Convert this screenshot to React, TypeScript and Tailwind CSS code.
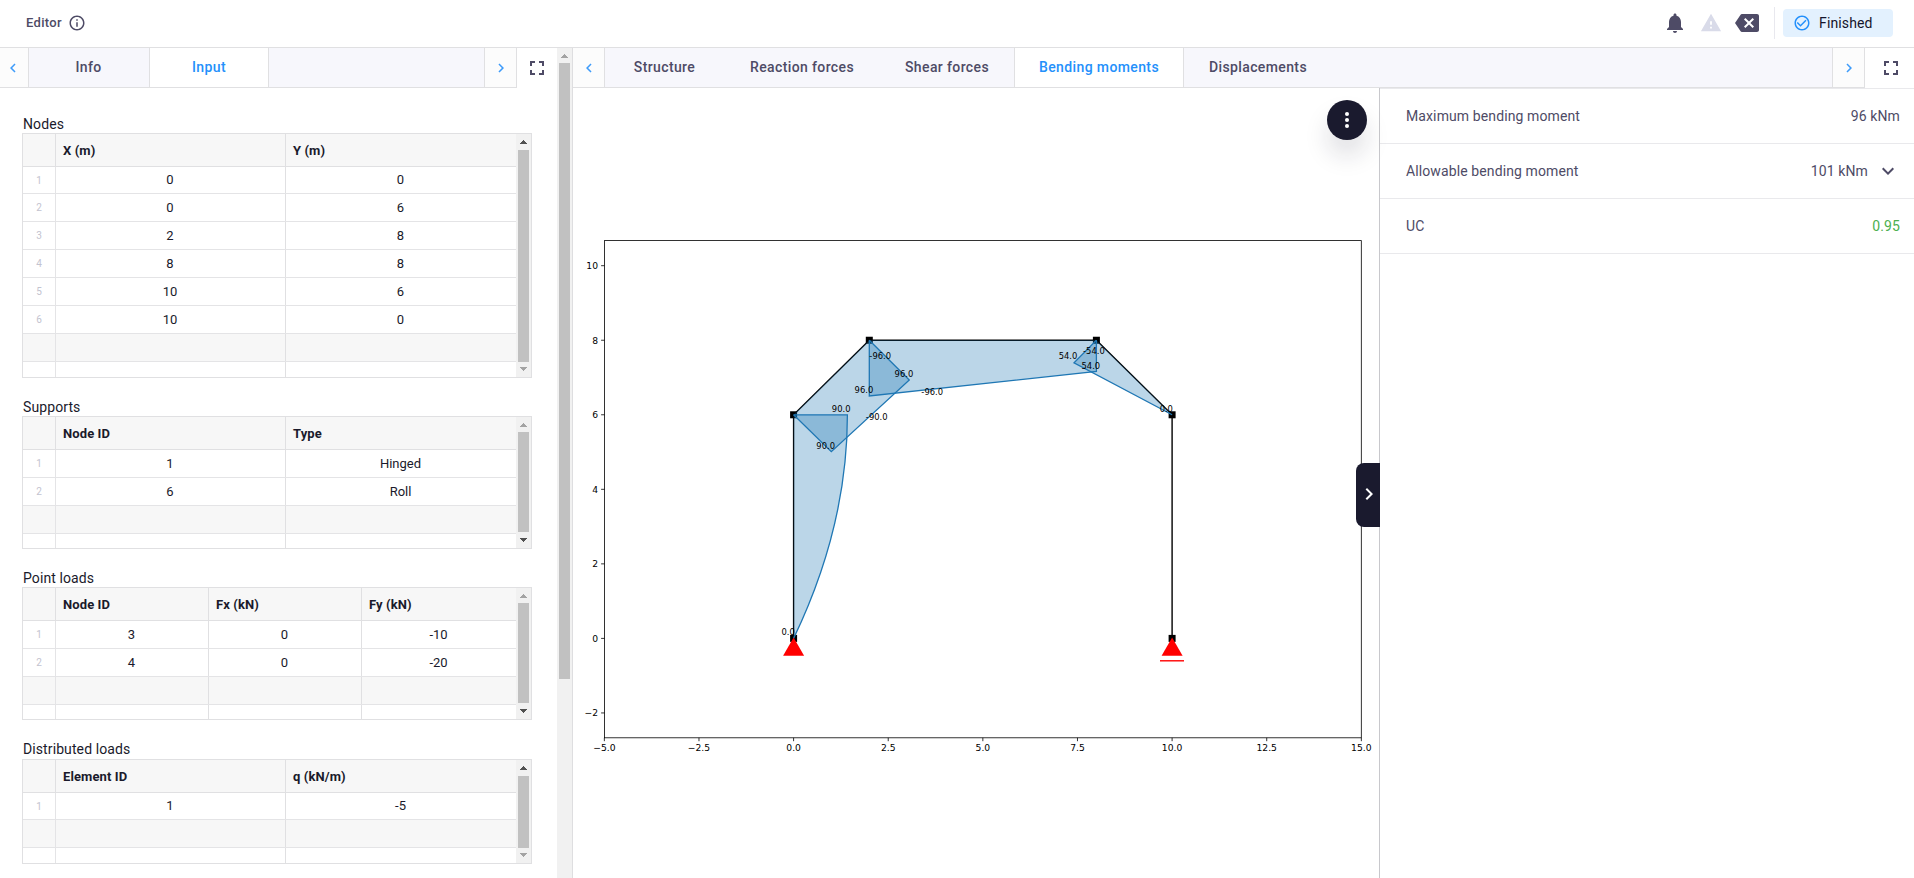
import React from "react";

type Column = { title: string; width: string };
type TableProps = {
  label: string;
  labelHeight: string;
  height: string;
  columns: Column[];
  rows: string[][];
  firstRow: string;
  thumb: string;
  atTop: boolean;
};

function ScrollBar({ thumb, up, down }: { thumb: string; up: string; down: string }) {
  return (
    <div className="flex w-[15px] shrink-0 flex-col items-center bg-[#f1f1f1]">
      <svg className={`mt-[6px] h-[4px] w-[7px] shrink-0 ${up}`} viewBox="0 0 7 4" fill="currentColor" shapeRendering="crispEdges">
        <path d="M3 0h1v1h1v1h1v1h1v1H0V3h1V2h1V1h1z" />
      </svg>
      <div className={`w-[11px] shrink-0 bg-[#c1c1c1] ${thumb}`} />
      <svg className={`h-[4px] w-[7px] shrink-0 ${down}`} viewBox="0 0 7 4" fill="currentColor" shapeRendering="crispEdges">
        <path d="M0 0h7v1H6v1H5v1H4v1H3V3H2V2H1V1H0z" />
      </svg>
    </div>
  );
}

function DataTable({ label, labelHeight, height, columns, rows, firstRow, thumb, atTop }: TableProps) {
  return (
    <section>
      <div className={`flex items-end pl-px text-[14px] leading-[17px] tracking-[0.1px] text-[#1a1a2b] ${labelHeight}`}>{label}</div>
      <div className={`flex w-[510px] overflow-hidden border border-[#e0e0e2] ${height}`}>
        <div className="w-[493px] shrink-0">
          <div className="flex h-[33px] border-b border-[#e0e0e2] bg-[#f7f7f7] text-[13px] font-bold tracking-[0.1px] text-[#1a1a2b]">
            <div className="w-[33px] shrink-0 border-r border-[#e0e0e2]" />
            {columns.map((c, i) => (
              <div key={c.title} className={`flex shrink-0 items-center border-[#e0e0e2] pt-[2px] pl-[7px] ${c.width} ${i < columns.length - 1 ? "border-r" : ""}`}>
                {c.title}
              </div>
            ))}
          </div>
          {[...rows, null, null].map((row, r) => (
            <div
              key={r}
              className={`flex border-b border-[#e4e4e6] text-[13px] text-[#1a1a2b] ${r === 0 ? firstRow : "h-[28px]"} ${r === rows.length ? "bg-[#f7f7f7]" : "bg-white"}`}
            >
              <div className="flex w-[33px] shrink-0 items-center justify-center border-r border-[#e4e4e6] text-[10px] text-[#c3c3cf]">
                {row ? r + 1 : ""}
              </div>
              {columns.map((c, i) => (
                <div
                  key={c.title}
                  className={`flex shrink-0 items-center justify-center border-[#e0e0e2] pr-px ${r === 0 && atTop ? "pb-px" : "pt-px"} ${c.width} ${i < columns.length - 1 ? "border-r" : ""}`}
                >
                  {row ? row[i] : ""}
                </div>
              ))}
            </div>
          ))}
        </div>
        <ScrollBar thumb={thumb} up={atTop ? "text-[#505050]" : "text-[#a3a3a3]"} down={atTop ? "mt-[5px] text-[#a3a3a3]" : "mt-[6px] text-[#505050]"} />
      </div>
    </section>
  );
}

function Chevron({ d, className }: { d: string; className: string }) {
  return (
    <svg viewBox="0 0 24 24" className={className} fill="currentColor">
      <path d={d} />
    </svg>
  );
}
const LEFT = "M15.41 7.41 14 6l-6 6 6 6 1.41-1.41L10.83 12z";
const RIGHT = "M10 6 8.59 7.41 13.17 12l-4.58 4.59L10 18l6-6z";
const DOWN = "M16.59 8.59 12 13.17 7.41 8.59 6 10l6 6 6-6z";

function Fullscreen() {
  return (
    <svg viewBox="0 0 24 24" className="size-6 text-[#4e4b66]" fill="currentColor">
      <path d="M7 14H5v5h5v-2H7v-3zm-2-4h2V7h3V5H5v5zm12 7h-3v2h5v-5h-2v3zM14 5v2h3v3h2V5h-5z" />
    </svg>
  );
}

const X0 = 220.6;
const Y0 = 550.4;
const SX = 37.85;
const SY = 37.27;
const px = (x: number) => X0 + x * SX;
const py = (y: number) => Y0 - y * SY;

const nodes: [number, number][] = [[0, 0], [0, 6], [2, 8], [8, 8], [10, 6], [10, 0]];
const xTicks: [number, string][] = [[-5, "−5.0"], [-2.5, "−2.5"], [0, "0.0"], [2.5, "2.5"], [5, "5.0"], [7.5, "7.5"], [10, "10.0"], [12.5, "12.5"], [15, "15.0"]];
const yTicks: [number, string][] = [[10, "10"], [8, "8"], [6, "6"], [4, "4"], [2, "2"], [0, "0"], [-2, "−2"]];
const labels: [number, number, string][] = [
  [215.2, 547.2, "0.0"], [268.2, 323.5, "90.0"], [252.7, 360.9, "90.0"], [303.7, 331.5, "-90.0"],
  [307.2, 271.2, "-96.0"], [330.9, 288.7, "96.0"], [290.9, 305.2, "96.0"], [359.2, 306.7, "-96.0"],
  [495, 271.2, "54.0"], [520.9, 265.5, "-54.0"], [517.8, 280.6, "54.0"], [593.3, 323.5, "0.0"],
];

function MomentChart() {
  return (
    <svg className="block h-[790px] w-[806px]" viewBox="0 0 806 790">
      <path d={nodes.map(([x, y], i) => `${i ? "L" : "M"}${px(x)} ${py(y)}`).join("")} fill="none" stroke="#000" strokeWidth="1.4" />
      {nodes.map(([x, y], i) => (
        <rect key={i} x={px(x) - 3.5} y={py(y) - 3.5} width="7" height="7" fill="#000" />
      ))}
      <g fill="#1f77b4" fillOpacity="0.3">
        <path d="M220.6 550.4Q274.4 438.5 274.4 326.8H220.6z" />
        <path d="M220.6 326.8 296.3 252.2 336.3 292 258.3 363.7z" />
        <path d="M296.3 252.2V308L523.4 283.4V252.2z" />
        <path d="M523.4 252.2 501 274.8 599.1 326.8z" />
      </g>
      <g fill="none" stroke="#1f77b4" strokeWidth="1.3">
        <path d="M220.6 550.4Q274.4 438.5 274.4 326.8H220.6" />
        <path d="M220.6 326.8 258.3 363.7 336.3 292 296.3 252.2" />
        <path d="M296.3 252.2V308L523.4 283.4V252.2" />
        <path d="M523.4 252.2 501 274.8 599.1 326.8" />
      </g>
      <g fill="#f00">
        <path d={`M${px(0)} 549.4l10.5 18.4h-21z`} />
        <path d={`M${px(10)} 549.4l10.5 18.4h-21z`} />
      </g>
      <path d="M587 572.8h24" stroke="#f00" strokeWidth="1.4" />
      <g fontFamily="DejaVu Sans, sans-serif" fontSize="8.4" textAnchor="middle" fill="#000">
        {labels.map(([x, y, t], i) => (
          <text key={i} x={x} y={y}>{t}</text>
        ))}
      </g>
      <rect x="31.5" y="152.6" width="756.8" height="497.2" fill="none" stroke="#000" strokeWidth="0.8" />
      <g stroke="#000" strokeWidth="0.8">
        {xTicks.map(([v]) => <path key={v} d={`M${px(v)} 649.8v3.4`} />)}
        {yTicks.map(([v]) => <path key={v} d={`M31.5 ${py(v)}h-3.4`} />)}
      </g>
      <g fontFamily="DejaVu Sans, sans-serif" fontSize="9.2" fill="#000">
        {xTicks.map(([v, t]) => <text key={v} x={px(v)} y="663.3" textAnchor="middle">{t}</text>)}
        {yTicks.map(([v, t]) => <text key={v} x="25" y={py(v) + 3.4} textAnchor="end">{t}</text>)}
      </g>
    </svg>
  );
}

const tabs: { name: string; style: string }[] = [
  { name: "Structure", style: "w-[119px] text-[#4e4b66]" },
  { name: "Reaction forces", style: "w-[156px] text-[#4e4b66]" },
  { name: "Shear forces", style: "w-[134px] text-[#4e4b66]" },
  { name: "Bending moments", style: "w-[170px] border-x border-[#e0e0e2] bg-white text-[#2490fb]" },
  { name: "Displacements", style: "w-[148px] text-[#4e4b66]" },
];

const two = (a: string, b: string): Column[] => [{ title: a, width: "w-[230px]" }, { title: b, width: "w-[230px]" }];

export default function App() {
  return (
    <div className="flex h-[878px] w-[1914px] flex-col overflow-hidden bg-white font-['Roboto',sans-serif]">
      <header className="flex h-12 shrink-0 items-center border-b border-[#e0e0e2] pl-[26px] pr-[21px] pb-px">
        <span className="text-[13px] font-medium tracking-[0.3px] text-[#4e4b66]">Editor</span>
        <svg viewBox="0 0 24 24" className="ml-[6px] size-[18px] text-[#4e4b66]" fill="currentColor">
          <path d="M11 7h2v2h-2zm0 4h2v6h-2zm1-9C6.480 2 2 6.480 2 12s4.480 10 10 10 10-4.480 10-10S17.520 2 12 2zm0 18c-4.410 0-8-3.590-8-8s3.590-8 8-8 8 3.590 8 8-3.590 8-8 8z" />
        </svg>
        <div className="ml-auto flex items-center">
          <svg viewBox="0 0 24 24" className="size-6 text-[#4e4b66]" fill="currentColor">
            <path d="M12 22c1.100 0 2-.9 2-2h-4c0 1.100.89 2 2 2zm6-6v-5c0-3.070-1.640-5.640-4.500-6.320V4c0-.83-.67-1.500-1.500-1.500s-1.500.67-1.500 1.500v.68C7.630 5.360 6 7.920 6 11v5l-2 2v1h16v-1l-2-2z" />
          </svg>
          <svg viewBox="0 0 24 24" className="ml-[13px] size-[22px] text-[#d9dbe9]" fill="currentColor">
            <path d="M1 21h22L12 2 1 21zm12-3h-2v-2h2v2zm0-4h-2v-4h2v4z" />
          </svg>
          <svg viewBox="0 0 24 24" className="ml-[13px] size-6 text-[#4e4b66]" fill="currentColor">
            <path d="M22 3H7c-.69 0-1.230.35-1.590.88L0 12l5.410 8.110c.36.53.9.89 1.590.89h15c1.100 0 2-.9 2-2V5c0-1.100-.9-2-2-2zm-3 12.590L17.590 17 14 13.410 10.410 17 9 15.590 12.590 12 9 8.410 10.410 7 14 10.590 17.590 7 19 8.410 15.410 12 19 15.590z" />
          </svg>
          <div className="ml-[15px] h-8 w-px bg-[#e8e8ee]" />
          <div className="ml-[8px] flex h-7 w-[110px] items-center rounded bg-[#e3f1fe] pl-[10px]">
            <svg viewBox="0 0 24 24" className="size-[18px] text-[#2490fb]" fill="currentColor">
              <path d="M16.590 7.580 10 14.170l-3.590-3.580L5 12l5 5 8-8zM12 2C6.480 2 2 6.480 2 12s4.480 10 10 10 10-4.480 10-10S17.520 2 12 2zm0 18c-4.420 0-8-3.580-8-8s3.580-8 8-8 8 3.580 8 8-3.580 8-8 8z" />
            </svg>
            <span className="ml-[8px] text-[14px] tracking-[0.14px] text-[#14142b]">Finished</span>
          </div>
        </div>
      </header>

      <div className="flex h-[830px]">
        <aside className="flex w-[573px] shrink-0 border-r border-[#dedee0]">
          <div className="flex w-[557px] flex-col">
            <nav className="flex h-10 shrink-0 text-[14px] font-medium tracking-[0.38px]">
              <div className="flex w-[517px] border-b border-r border-[#e0e0e2] bg-[#f7f7fc]">
                <div className="flex w-[29px] items-center border-r border-[#e0e0e2] bg-[#fcfcfc] pl-[4px]">
                  <Chevron d={LEFT} className="size-[18px] text-[#3d9bfa]" />
                </div>
                <div className="flex w-[120px] items-center justify-center pr-px text-[#4e4b66]">Info</div>
                <div className="flex w-[120px] items-center justify-center border-x border-[#e0e0e2] bg-white text-[#2490fb]">Input</div>
                <div className="ml-auto flex w-[32px] items-center justify-center border-l border-[#e0e0e2] bg-[#fcfcfc]">
                  <Chevron d={RIGHT} className="size-[18px] text-[#3d9bfa]" />
                </div>
              </div>
              <div className="flex flex-1 items-center justify-center">
                <Fullscreen />
              </div>
            </nav>
            <main className="pl-[22px]">
              <DataTable label="Nodes" labelHeight="h-[45px]" height="h-[245px]" columns={two("X (m)", "Y (m)")}
                rows={[["0", "0"], ["0", "6"], ["2", "8"], ["8", "8"], ["10", "6"], ["10", "0"]]}
                firstRow="h-[27px]" thumb="mt-[6px] h-[212px]" atTop />
              <DataTable label="Supports" labelHeight="h-[38px]" height="h-[133px]" columns={two("Node ID", "Type")}
                rows={[["1", "Hinged"], ["6", "Roll"]]}
                firstRow="h-[28px]" thumb="mt-[5px] h-[100px]" atTop={false} />
              <DataTable label="Point loads" labelHeight="h-[38px]" height="h-[133px]"
                columns={[{ title: "Node ID", width: "w-[153px]" }, { title: "Fx (kN)", width: "w-[153px]" }, { title: "Fy (kN)", width: "w-[154px]" }]}
                rows={[["3", "0", "-10"], ["4", "0", "-20"]]}
                firstRow="h-[28px]" thumb="mt-[5px] h-[100px]" atTop={false} />
              <DataTable label="Distributed loads" labelHeight="h-[39px] pb-px" height="h-[105px]" columns={two("Element ID", "q (kN/m)")}
                rows={[["1", "-5"]]}
                firstRow="h-[27px]" thumb="mt-[6px] h-[72px]" atTop />
            </main>
          </div>
          <ScrollBar thumb="mt-[5px] h-[616px]" up="text-[#a3a3a3]" down="text-transparent" />
        </aside>

        <div className="flex flex-1 flex-col">
          <nav className="flex h-10 shrink-0 text-[14px] font-medium tracking-[0.38px]">
            <div className="flex w-[1292px] border-b border-r border-[#e0e0e2] bg-[#f7f7fc]">
              <div className="flex w-[32px] items-center border-r border-[#e0e0e2] bg-[#fcfcfc] pl-[7px]">
                <Chevron d={LEFT} className="size-[18px] text-[#3d9bfa]" />
              </div>
              {tabs.map((t) => (
                <div key={t.name} className={`flex items-center justify-center ${t.style}`}>{t.name}</div>
              ))}
              <div className="ml-auto flex w-[32px] items-center justify-center border-l border-[#e0e0e2] bg-[#fcfcfc]">
                <Chevron d={RIGHT} className="size-[18px] text-[#3d9bfa]" />
              </div>
            </div>
            <div className="flex flex-1 items-center justify-center pl-[3px]">
              <Fullscreen />
            </div>
          </nav>
          <div className="flex h-[790px]">
            <div className="relative w-[807px] border-r border-[#c8c8cc]">
              <MomentChart />
              <button className="absolute right-[12px] top-[12px] flex size-10 items-center justify-center rounded-full bg-[#1a1a2e] shadow-[0_16px_24px_rgba(20,20,43,0.13)]">
                <svg viewBox="0 0 24 24" className="size-6" fill="#fff">
                  <circle cx="12" cy="6" r="2" />
                  <circle cx="12" cy="12" r="2" />
                  <circle cx="12" cy="18" r="2" />
                </svg>
              </button>
              <button className="absolute right-[-1px] top-[375px] flex h-16 w-6 items-center justify-center rounded-l-lg bg-[#1a1a2e] pb-[2px] pl-px">
                <Chevron d={RIGHT} className="size-6 shrink-0 text-white" />
              </button>
            </div>
            <div className="flex-1 text-[14px] tracking-[0.11px] text-[#4e4b66]">
              <div className="flex h-[56px] items-center justify-between border-y border-[#e9e9ec] pl-[26px] pr-[14px]">
                <span>Maximum bending moment</span>
                <span>96 kNm</span>
              </div>
              <div className="flex h-[55px] items-center justify-between border-b border-[#e9e9ec] pl-[26px] pr-[14px]">
                <span>Allowable bending moment</span>
                <span className="flex items-center gap-2">
                  101 kNm
                  <Chevron d={DOWN} className="size-6" />
                </span>
              </div>
              <div className="flex h-[55px] items-center justify-between border-b border-[#e9e9ec] pl-[26px] pr-[14px]">
                <span>UC</span>
                <span className="text-[#4caf50]">0.95</span>
              </div>
            </div>
          </div>
        </div>
      </div>
    </div>
  );
}
